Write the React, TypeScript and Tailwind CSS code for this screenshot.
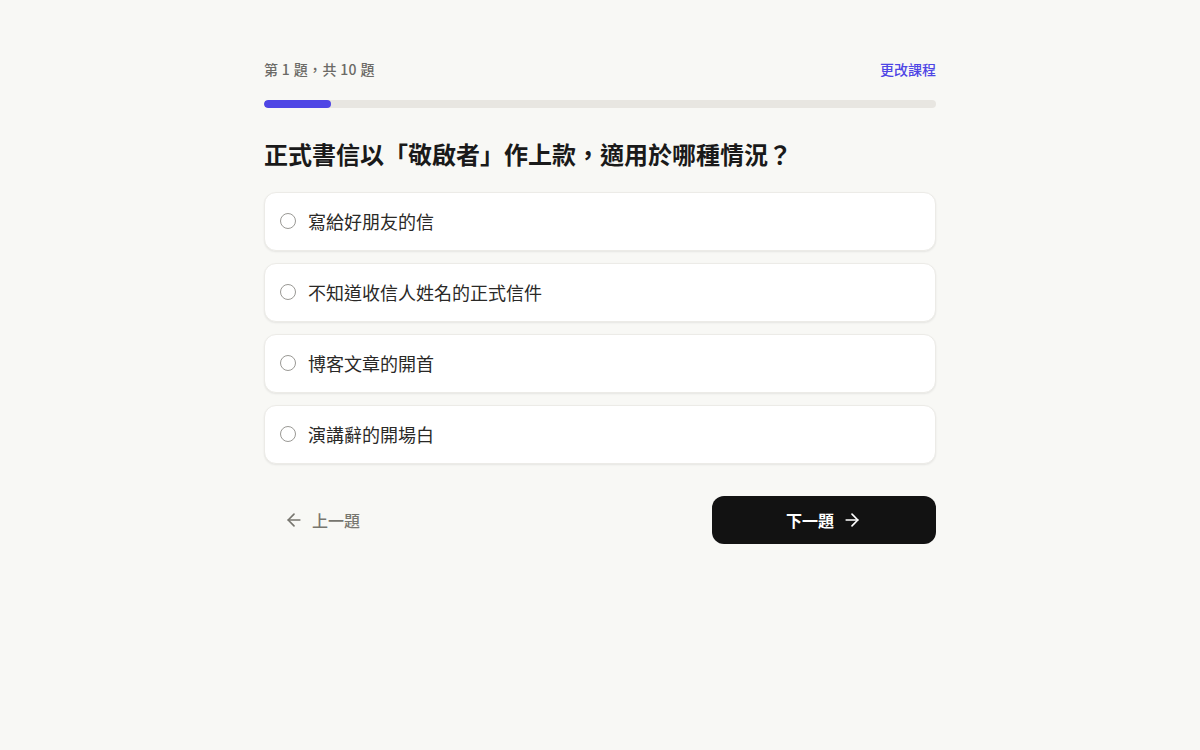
import { ArrowLeft, ArrowRight } from "lucide-react";

const OPTIONS = ["寫給好朋友的信", "不知道收信人姓名的正式信件", "博客文章的開首", "演講辭的開場白"];

export default function App() {
  const current = 1;
  const total = 10;

  return (
    <div
      className="min-h-[750px] w-full bg-[#f8f8f5] text-[#1c1b1a]"
      style={{ fontFamily: '"Noto Sans CJK TC", "Noto Sans", sans-serif' }}
    >
      <div className="mx-auto flex w-[672px] flex-col pt-[59px]">
        {/* 進度 */}
        <div className="flex items-center justify-between text-sm leading-5">
          <span className="font-medium tracking-wide text-[#6b6a66]">
            第 {current} 題，共 {total} 題
          </span>
          <button className="font-medium text-[#4f46e5]">更改課程</button>
        </div>
        <div className="mt-[21px] h-2 w-full overflow-hidden rounded-full bg-[#e8e6e1]">
          <div className="h-full rounded-full bg-[#4f46e5]" style={{ width: `${(current / total) * 100}%` }} />
        </div>

        {/* 題目 */}
        <h1 className="mt-[30px] text-2xl leading-8 font-bold text-[#1a1a1a]">
          正式書信以「敬啟者」作上款，適用於哪種情況？
        </h1>

        <div className="mt-[22px] flex flex-col gap-3">
          {OPTIONS.map((o) => (
            <label
              key={o}
              className="flex h-[59px] cursor-pointer items-center gap-3 rounded-xl border border-[#ecebe7] bg-white pb-0.5 pl-4 shadow-[0_1px_2px_rgba(0,0,0,0.08)]"
            >
              <span className="-ml-px h-4 w-4 rounded-full border border-[#9a9995] bg-white" />
              <span className="text-lg leading-7 text-[#2a2927]">{o}</span>
            </label>
          ))}
        </div>

        {/* 導航 */}
        <div className="mt-8 flex items-center justify-between">
          <button className="flex h-12 items-center gap-2 px-5 text-base font-medium text-[#77766f]">
            <ArrowLeft className="h-5 w-5" strokeWidth={2} />
            上一題
          </button>
          <button className="flex h-12 w-56 items-center justify-center gap-2 rounded-xl bg-[#121212] text-base font-semibold text-white">
            下一題
            <ArrowRight className="h-5 w-5" strokeWidth={2} />
          </button>
        </div>
      </div>
    </div>
  );
}
